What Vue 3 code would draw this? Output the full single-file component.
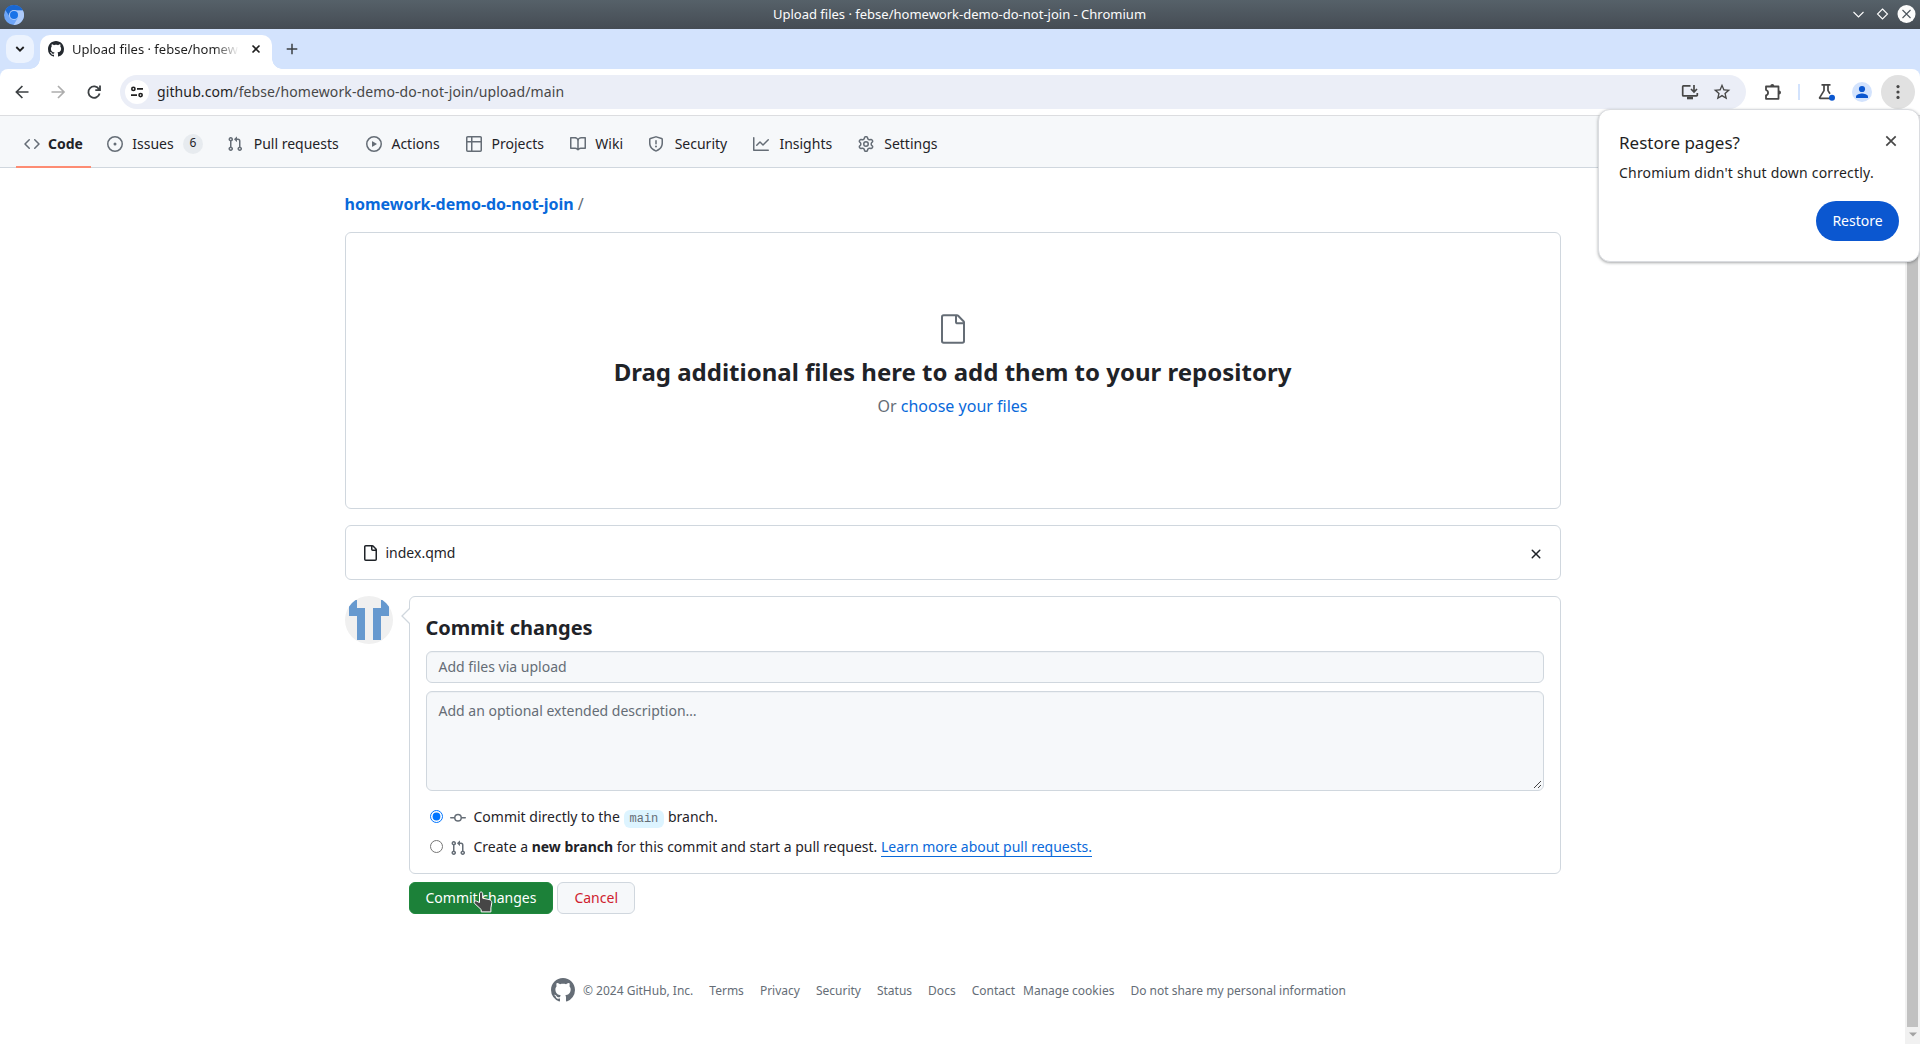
<script setup>
const tabs = [
  { label: 'Code', active: true, d: 'm11.28 3.22 4.25 4.25a.75.75 0 0 1 0 1.06l-4.25 4.25a.749.749 0 0 1-1.275-.326.749.749 0 0 1 .215-.734L13.94 8l-3.72-3.72a.749.749 0 0 1 .326-1.275.749.749 0 0 1 .734.215Zm-6.56 0a.751.751 0 0 1 1.042.018.751.751 0 0 1 .018 1.042L2.06 8l3.72 3.72a.749.749 0 0 1-.326 1.275.749.749 0 0 1-.734-.215L.47 8.53a.75.75 0 0 1 0-1.06Z' },
  { label: 'Issues', count: 6, d: 'M8 9.5a1.5 1.5 0 1 0 0-3 1.5 1.5 0 0 0 0 3ZM8 0a8 8 0 1 1 0 16A8 8 0 0 1 8 0ZM1.5 8a6.5 6.5 0 1 0 13 0 6.5 6.5 0 0 0-13 0Z' },
  { label: 'Pull requests', d: 'M1.5 3.25a2.25 2.25 0 1 1 3 2.122v5.256a2.251 2.251 0 1 1-1.5 0V5.372A2.25 2.25 0 0 1 1.5 3.25Zm5.677-.177L9.573.677A.25.25 0 0 1 10 .854V2.5h1A2.5 2.5 0 0 1 13.5 5v5.628a2.251 2.251 0 1 1-1.5 0V5a1 1 0 0 0-1-1h-1v1.646a.25.25 0 0 1-.427.177L7.177 3.427a.25.25 0 0 1 0-.354ZM3.75 2.5a.75.75 0 1 0 0 1.5.75.75 0 0 0 0-1.5Zm0 9.5a.75.75 0 1 0 0 1.5.75.75 0 0 0 0-1.5Zm8.25.75a.75.75 0 1 0 1.5 0 .75.75 0 0 0-1.5 0Z' },
  { label: 'Actions', d: 'M8 0a8 8 0 1 1 0 16A8 8 0 0 1 8 0ZM1.5 8a6.5 6.5 0 1 0 13 0 6.5 6.5 0 0 0-13 0Zm4.879-2.773 4.264 2.559a.25.25 0 0 1 0 .428l-4.264 2.559A.25.25 0 0 1 6 10.559V5.442a.25.25 0 0 1 .379-.215Z' },
  { label: 'Projects', d: 'M0 1.75C0 .784.784 0 1.75 0h12.5C15.216 0 16 .784 16 1.75v12.5A1.75 1.75 0 0 1 14.25 16H1.75A1.75 1.75 0 0 1 0 14.25ZM6.5 6.5v8h7.75a.25.25 0 0 0 .25-.25V6.5Zm8-1.5V1.75a.25.25 0 0 0-.25-.25H6.5V5Zm-13 1.5v7.75c0 .138.112.25.25.25H5v-8ZM5 5V1.5H1.75a.25.25 0 0 0-.25.25V5Z' },
  { label: 'Wiki', d: 'M0 1.75A.75.75 0 0 1 .75 1h4.253c1.227 0 2.317.59 3 1.501A3.743 3.743 0 0 1 11.006 1h4.245a.75.75 0 0 1 .75.75v10.5a.75.75 0 0 1-.75.75h-4.507a2.25 2.25 0 0 0-1.591.659l-.622.621a.75.75 0 0 1-1.06 0l-.622-.621A2.25 2.25 0 0 0 5.258 13H.75a.75.75 0 0 1-.75-.75Zm7.251 10.324.004-5.073-.002-2.253A2.25 2.25 0 0 0 5.003 2.5H1.5v9h3.757a3.75 3.75 0 0 1 1.994.574ZM8.755 4.75l-.004 7.322a3.752 3.752 0 0 1 1.992-.572H14.5v-9h-3.495a2.25 2.25 0 0 0-2.25 2.25Z' },
  { label: 'Security', d: 'M7.467.133a1.748 1.748 0 0 1 1.066 0l5.25 1.68A1.75 1.75 0 0 1 15 3.48V7c0 1.566-.32 3.182-1.303 4.682-.983 1.498-2.585 2.813-5.032 3.855a1.697 1.697 0 0 1-1.33 0c-2.447-1.042-4.049-2.357-5.032-3.855C1.32 10.182 1 8.566 1 7V3.48a1.75 1.75 0 0 1 1.217-1.667Zm.61 1.429a.25.25 0 0 0-.153 0l-5.25 1.68a.25.25 0 0 0-.174.238V7c0 1.358.275 2.666 1.057 3.86.784 1.194 2.121 2.34 4.366 3.297a.196.196 0 0 0 .154 0c2.245-.956 3.582-2.104 4.366-3.298C13.225 9.666 13.5 8.36 13.5 7V3.48a.251.251 0 0 0-.174-.237l-5.25-1.68ZM8.75 4.75v3a.75.75 0 0 1-1.5 0v-3a.75.75 0 0 1 1.5 0ZM9 10.5a1 1 0 1 1-2 0 1 1 0 0 1 2 0Z' },
  { label: 'Insights', d: 'M1.5 1.75V13.5h13.75a.75.75 0 0 1 0 1.5H.75a.75.75 0 0 1-.75-.75V1.75a.75.75 0 0 1 1.5 0Zm14.28 2.53-5.25 5.25a.75.75 0 0 1-1.06 0L7 7.06 4.28 9.78a.751.751 0 0 1-1.042-.018.751.751 0 0 1-.018-1.042l3.25-3.25a.75.75 0 0 1 1.06 0L10 7.94l4.72-4.72a.751.751 0 0 1 1.042.018.751.751 0 0 1 .018 1.042Z' },
  { label: 'Settings', d: 'M8 0a8.2 8.2 0 0 1 .701.031C9.444.095 9.99.645 10.16 1.29l.288 1.107c.018.066.079.158.212.224.231.114.454.243.668.386.123.082.233.09.299.071l1.103-.303c.644-.176 1.392.021 1.82.63.27.385.506.792.704 1.218.315.675.111 1.422-.364 1.891l-.814.806c-.049.048-.098.147-.088.294.016.257.016.515 0 .772-.01.147.038.246.088.294l.814.806c.475.469.679 1.216.364 1.891a7.977 7.977 0 0 1-.704 1.217c-.428.61-1.176.807-1.82.63l-1.102-.302c-.067-.019-.177-.011-.3.071a5.909 5.909 0 0 1-.668.386c-.133.066-.194.158-.211.224l-.29 1.106c-.168.646-.715 1.196-1.458 1.26a8.006 8.006 0 0 1-1.402 0c-.743-.064-1.289-.614-1.458-1.26l-.289-1.106c-.018-.066-.079-.158-.212-.224a5.738 5.738 0 0 1-.668-.386c-.123-.082-.233-.09-.299-.071l-1.103.303c-.644.176-1.392-.021-1.82-.63a8.12 8.12 0 0 1-.704-1.218c-.315-.675-.111-1.422.363-1.891l.815-.806c.05-.048.098-.147.088-.294a6.214 6.214 0 0 1 0-.772c.01-.147-.038-.246-.088-.294l-.815-.806C.635 6.045.431 5.298.746 4.623a7.92 7.92 0 0 1 .704-1.217c.428-.61 1.176-.807 1.82-.63l1.102.302c.067.019.177.011.3-.071.214-.143.437-.272.668-.386.133-.066.194-.158.211-.224l.29-1.106C6.009.645 6.556.095 7.299.03 7.53.01 7.764 0 8 0Zm-.571 1.525c-.036.003-.108.036-.137.146l-.289 1.105c-.147.561-.549.967-.998 1.189-.173.086-.34.183-.5.29-.417.278-.97.423-1.529.27l-1.103-.303c-.109-.03-.175.016-.195.045-.22.312-.412.644-.573.99-.014.031-.021.11.059.19l.815.806c.411.406.562.957.53 1.456a4.709 4.709 0 0 0 0 .582c.032.499-.119 1.05-.53 1.456l-.815.806c-.081.08-.073.159-.059.19.162.346.353.677.573.989.02.03.085.076.195.046l1.102-.303c.56-.153 1.113-.008 1.53.27.161.107.328.204.501.29.447.222.85.629.997 1.189l.289 1.105c.029.109.101.143.137.146a6.6 6.6 0 0 0 1.142 0c.036-.003.108-.036.137-.146l.289-1.105c.147-.561.549-.967.998-1.189.173-.086.34-.183.5-.29.417-.278.97-.423 1.529-.27l1.103.303c.109.029.175-.016.195-.045.22-.313.411-.644.573-.99.014-.031.021-.11-.059-.19l-.815-.806c-.411-.406-.562-.957-.53-1.456a4.709 4.709 0 0 0 0-.582c-.032-.499.119-1.05.53-1.456l.815-.806c.081-.08.073-.159.059-.19a6.464 6.464 0 0 0-.573-.989c-.02-.03-.085-.076-.195-.046l-1.102.303c-.56.153-1.113.008-1.53-.27a4.44 4.44 0 0 0-.501-.29c-.447-.222-.85-.629-.997-1.189l-.289-1.105c-.029-.11-.101-.143-.137-.146a6.6 6.6 0 0 0-1.142 0ZM11 8a3 3 0 1 1-6 0 3 3 0 0 1 6 0ZM9.5 8a1.5 1.5 0 1 0-3.001.001A1.5 1.5 0 0 0 9.5 8Z' },
]
const prPath = tabs[2].d
const markPath = 'M8 0c4.42 0 8 3.58 8 8a8.013 8.013 0 0 1-5.45 7.59c-.4.08-.55-.17-.55-.38 0-.27.01-1.13.01-2.2 0-.75-.25-1.23-.54-1.48 1.78-.2 3.65-.88 3.65-3.95 0-.88-.31-1.59-.82-2.15.08-.2.36-1.02-.08-2.12 0 0-.67-.22-2.2.82-.64-.18-1.32-.27-2-.27-.68 0-1.36.09-2 .27-1.53-1.03-2.2-.82-2.2-.82-.44 1.1-.16 1.92-.08 2.12-.51.56-.82 1.28-.82 2.15 0 3.06 1.86 3.75 3.64 3.95-.23.2-.44.55-.51 1.07-.46.21-1.61.55-2.33-.66-.15-.24-.6-.83-1.23-.82-.67.01-.27.38.01.53.34.19.73.9.82 1.13.16.45.68 1.31 2.69.94 0 .67.01 1.3.01 1.49 0 .21-.15.45-.55.38A7.995 7.995 0 0 1 0 8c0-4.42 3.58-8 8-8Z'
const footerLinks = ['Terms', 'Privacy', 'Security', 'Status', 'Docs', 'Contact']
</script>

<template>
  <div class="window">
    <header class="titlebar">
      <svg class="app-icon" viewBox="0 0 20 20" width="20" height="20">
        <circle cx="10" cy="10" r="10" fill="#6ea5f8" />
        <path d="M10 5.3h8.8A10 10 0 0 1 9.6 20l4.5-7.6z" fill="#aecbfa" />
        <path d="M1.3 5A10 10 0 0 1 18.8 5.3H10a4.7 4.7 0 0 0-4.4 6.2z" fill="#1967d2" />
        <circle cx="10" cy="10" r="5" fill="#aecbfa" />
        <circle cx="10" cy="10" r="4" fill="#1a73e8" />
      </svg>
      <span class="window-title">Upload files · febse/homework-demo-do-not-join - Chromium</span>
      <svg class="window-buttons" viewBox="0 0 68 20" width="68" height="20" fill="none">
        <path d="M1.5 8l5 5 5-5" stroke="#fcfcfc" stroke-width="1.1" />
        <path d="M30.5 5l5 5-5 5-5-5z" stroke="#fcfcfc" stroke-width="1.1" />
        <circle cx="54.5" cy="10" r="9" fill="#fcfcfc" />
        <path d="M50.5 6l8 8m0-8l-8 8" stroke="#4b545c" stroke-width="1.1" />
      </svg>
    </header>

    <div class="tabstrip">
      <div class="tab-search">
        <svg viewBox="0 0 10 10" width="10" height="10" fill="none"><path d="M1.3 3l3.7 3.7L8.7 3" stroke="#1f1f1f" stroke-width="1.8" /></svg>
      </div>
      <div class="browser-tab">
        <svg viewBox="0 0 16 16" width="16" height="16" fill="#24292f"><path :d="markPath" /></svg>
        <span class="tab-title">Upload files · febse/homew</span>
        <svg viewBox="0 0 10 10" width="10" height="10"><path d="M1.5 1.5l7 7m0-7l-7 7" stroke="#1f1f1f" stroke-width="1.6" /></svg>
      </div>
      <svg class="new-tab" viewBox="0 0 12 12" width="12" height="12"><path d="M6 .7v10.6M.7 6h10.6" stroke="#3c4043" stroke-width="1.5" /></svg>
    </div>

    <div class="toolbar-back">
      <div class="toolbar">
        <svg class="nav-icon" viewBox="0 0 20 20" width="20" height="20" fill="none" stroke="#3c4043" stroke-width="1.7"><path d="M16.5 10H4.6M10.4 4l-6 6 6 6" /></svg>
        <svg class="nav-icon" viewBox="0 0 20 20" width="20" height="20" fill="none" stroke="#adadad" stroke-width="1.7"><path d="M3.5 10h12.3M10 4l6 6-6 6" /></svg>
        <svg class="nav-icon" viewBox="0 0 20 20" width="20" height="20" fill="none" stroke="#3c4043" stroke-width="1.8"><path d="M15.6 11.5A5.7 5.7 0 1 1 15 7.2M16 3.5v4.7h-4.7" /></svg>
        <div class="omnibox">
          <span class="site-info">
            <svg viewBox="0 0 14 14" width="14" height="14" fill="none" stroke="#1f1f1f" stroke-width="1.6"><circle cx="3.4" cy="3.9" r="1.6" /><path d="M7 3.9h6M1 10.1h6" /><circle cx="10.6" cy="10.1" r="1.6" /></svg>
          </span>
          <span class="url"><b>github.com</b>/febse/homework-demo-do-not-join/upload/main</span>
          <svg class="install" viewBox="0 0 18 16" width="18" height="16" fill="none" stroke="#474747" stroke-width="1.7"><path d="M9.5 1.9H2.4a.7.7 0 0 0-.7.7v8.6c0 .4.3.7.7.7h13.2a.7.7 0 0 0 .7-.7V9" /><path d="M13 1v6.6M10 5l3 3 3-3" /><path d="M6 14h6" stroke-width="2.6" /></svg>
          <svg viewBox="0 0 24 24" width="20" height="20" fill="#474747"><path d="M22 9.24l-7.19-.62L12 2 9.19 8.63 2 9.24l5.46 4.73L5.82 21 12 17.27 18.18 21l-1.63-7.03L22 9.24zM12 15.4l-3.76 2.27 1-4.28-3.32-2.88 4.38-.38L12 6.1l1.71 4.04 4.38.38-3.32 2.88 1 4.28L12 15.4z" /></svg>
        </div>
        <svg class="ext" viewBox="0 0 18 18" width="18" height="18"><path d="M2 3.5h12.5v12.3H2v-3.4a2.8 2.8 0 0 0 0-5.4z" fill="none" stroke="#474747" stroke-width="1.8" stroke-linejoin="round" /><path d="M6.3 3a2 2 0 0 1 4 0zM15 7.6a2 2 0 0 1 0 4z" fill="#474747" /></svg>
        <i class="divider"></i>
        <svg class="flask" viewBox="0 0 20 20" width="20" height="20" fill="none"><path d="M4.5 2.9h9M7 3v5.6L2.7 15.6a.5.5 0 0 0 .4.8H15M11 3v5.6l2 3.2" stroke="#474747" stroke-width="1.7" /><circle cx="15" cy="15.8" r="3" fill="#0b57d0" /></svg>
        <svg class="profile" viewBox="0 0 20 20" width="20" height="20"><circle cx="10" cy="10" r="10" fill="#d3e3fd" /><circle cx="10" cy="7" r="3.1" fill="#0b57d0" /><path d="M4 16v-1.6c0-2 4-3 6-3s6 1 6 3V16z" fill="#0b57d0" /></svg>
        <span class="menu"><svg viewBox="0 0 4 16" width="4" height="16" fill="#474747"><circle cx="2" cy="2.6" r="1.6" /><circle cx="2" cy="8" r="1.6" /><circle cx="2" cy="13.4" r="1.6" /></svg></span>
      </div>
    </div>

    <div class="viewport">
      <div class="page">
        <nav class="repo-nav">
          <a v-for="t in tabs" :key="t.label" class="repo-tab" :class="{ active: t.active }">
            <svg viewBox="0 0 16 16" width="16" height="16"><path :d="t.d" /></svg>
            <span class="tab-label" :data-content="t.label">{{ t.label }}</span>
            <span v-if="t.count" class="counter">{{ t.count }}</span>
          </a>
        </nav>

        <main class="container">
          <div class="breadcrumb"><a>homework-demo-do-not-join</a> /</div>

          <section class="dropzone">
            <svg viewBox="0 0 24 24" width="32" height="32" fill="#656d76"><path fill-rule="evenodd" d="M3 3a2 2 0 0 1 2-2h9.982a2 2 0 0 1 1.414.586l4.018 4.018A2 2 0 0 1 21 7.018V21a2 2 0 0 1-2 2H5a2 2 0 0 1-2-2Zm2-.5a.5.5 0 0 0-.5.5v18a.5.5 0 0 0 .5.5h14a.5.5 0 0 0 .5-.5V8.5h-4a2 2 0 0 1-2-2v-4Zm10 0v4a.5.5 0 0 0 .5.5h4a.5.5 0 0 0-.146-.336l-4.018-4.018A.5.5 0 0 0 15 2.5Z" /></svg>
            <h2>Drag additional files here to add them to your repository</h2>
            <p>Or <a>choose your files</a></p>
          </section>

          <section class="file-row">
            <svg viewBox="0 0 16 16" width="16" height="16" fill="#1f2328"><path d="M2 1.75C2 .784 2.784 0 3.75 0h6.586c.464 0 .909.184 1.237.513l2.914 2.914c.329.328.513.773.513 1.237v9.586A1.75 1.75 0 0 1 13.25 16h-9.5A1.75 1.75 0 0 1 2 14.25Zm1.75-.25a.25.25 0 0 0-.25.25v12.5c0 .138.112.25.25.25h9.5a.25.25 0 0 0 .25-.25V6h-2.75A1.75 1.75 0 0 1 9 4.25V1.5Zm6.75.062V4.25c0 .138.112.25.25.25h2.688l-.011-.013-2.914-2.914-.013-.011Z" /></svg>
            <span class="file-name">index.qmd</span>
            <svg class="remove" viewBox="0 0 16 16" width="16" height="16" fill="#1f2328"><path d="M3.72 3.72a.75.75 0 0 1 1.06 0L8 6.94l3.22-3.22a.749.749 0 0 1 1.275.326.749.749 0 0 1-.215.734L9.06 8l3.22 3.22a.749.749 0 0 1-.326 1.275.749.749 0 0 1-.734-.215L8 9.06l-3.22 3.22a.751.751 0 0 1-1.042-.018.751.751 0 0 1-.018-1.042L6.94 8 3.72 4.78a.75.75 0 0 1 0-1.06Z" /></svg>
          </section>

          <div class="commit">
            <svg class="avatar" viewBox="0 0 48 48" width="48" height="48">
              <clipPath id="round"><circle cx="24" cy="24" r="24" /></clipPath>
              <g clip-path="url(#round)"><rect width="48" height="48" fill="#f0f0f0" /><path d="M4 4h8v8h8v32h-8V20H4zM44 4h-8v8h-8v32h8V20h8z" fill="#6699cf" /></g>
            </svg>
            <div class="commit-main">
              <section class="commit-box">
                <svg class="caret" viewBox="0 0 9 16" width="9" height="16"><path d="M9 0L1 8l8 8" fill="#fff" stroke="#d0d7de" stroke-width="1.3" /></svg>
                <h3>Commit changes</h3>
                <div class="field">Add files via upload</div>
                <div class="field area">
                  Add an optional extended description…
                  <svg class="grip" viewBox="0 0 9 9" width="9" height="9"><path d="M1 8l7-7M5 8l3-3" stroke="#444" stroke-width="1" /></svg>
                </div>
                <label class="choice">
                  <input type="radio" name="target" checked />
                  <svg viewBox="0 0 16 16" width="16" height="16" fill="#656d76"><path d="M11.93 8.5a4.002 4.002 0 0 1-7.86 0H.75a.75.75 0 0 1 0-1.5h3.32a4.002 4.002 0 0 1 7.86 0h3.32a.75.75 0 0 1 0 1.5Zm-1.43-.75a2.5 2.5 0 1 0-5 0 2.5 2.5 0 0 0 5 0Z" /></svg>
                  <span>Commit directly to the <code>main</code> branch.</span>
                </label>
                <label class="choice second">
                  <input type="radio" name="target" />
                  <svg viewBox="0 0 16 16" width="16" height="16" fill="#656d76"><path :d="prPath" /></svg>
                  <span>Create a <strong>new branch</strong> for this commit and start a pull request. <a>Learn more about pull requests.</a></span>
                </label>
              </section>
              <div class="actions">
                <button class="primary">Commit changes
                  <svg class="cursor" viewBox="0 0 20 22" width="20" height="22"><path d="M6.5 11.5V2.8c0-2.4 3.2-2.4 3.2 0v4.4l6.3 1.3c1.8.4 2.8 1.4 2.8 3.2l-.9 5.2v4H8.2v-2.3L1.2 12c-.8-1.3 1-2.6 2.2-1.9z" fill="#464646" stroke="#fff" stroke-width="1" /></svg>
                </button>
                <button class="cancel">Cancel</button>
              </div>
            </div>
          </div>
        </main>

        <footer class="footer">
          <svg viewBox="0 0 16 16" width="24" height="24" fill="#656d76"><path :d="markPath" /></svg>
          <span class="copy">© 2024 GitHub, Inc.</span>
          <a v-for="l in footerLinks" :key="l">{{ l }}</a>
          <a class="cookies">Manage cookies</a>
          <a>Do not share my personal information</a>
        </footer>
      </div>
      <div class="scrollbar">
        <div class="thumb"></div>
        <svg viewBox="0 0 8 5" width="8" height="5"><path d="M0 .5h8L4 4.5z" fill="#a3a3a3" /></svg>
      </div>
    </div>

    <aside class="popover">
      <div class="pop-head">
        <span>Restore pages?</span>
        <svg viewBox="0 0 12 12" width="12" height="12"><path d="M1.3 1.3l9.4 9.4m0-9.4l-9.4 9.4" stroke="#474747" stroke-width="1.7" /></svg>
      </div>
      <p>Chromium didn't shut down correctly.</p>
      <button>Restore</button>
    </aside>
  </div>
</template>

<style>
html, body { margin: 0; overflow: hidden; background: #fff; }
</style>

<style scoped>
.window, .window * { box-sizing: border-box; }
.window {
  position: relative; width: 1920px; height: 1044px; overflow: hidden;
  display: flex; flex-direction: column;
  font-family: "Noto Sans", sans-serif; font-size: 14px; color: #1f2328;
}
svg { display: block; flex: none; }
button { font: inherit; margin: 0; padding: 0; border: 0; }
.titlebar {
  height: 29px; flex: none; display: flex; align-items: center; padding: 0 0 0 4px;
  background: linear-gradient(#566169, #454c54); color: #fcfcfc; font-size: 13px;
}
.window-title { flex: 1; text-align: center; padding-left: 43px; line-height: 28px; height: 29px; }
.window-buttons { margin-top: -1px; }
.tabstrip { height: 40px; flex: none; display: flex; background: #d3e3fd; padding: 6px 0 0 6px; }
.tab-search { width: 28px; height: 28px; border-radius: 10px; background: #ecf3fe; display: flex; align-items: center; justify-content: center; }
.browser-tab {
  position: relative; width: 232px; height: 34px; margin-left: 6px; padding: 0 11px 6px 8px;
  display: flex; align-items: center; background: #fff; border-radius: 10px 10px 0 0;
}
.browser-tab::before, .browser-tab::after { content: ""; position: absolute; bottom: 0; width: 10px; height: 10px; }
.browser-tab::before { left: -10px; background: radial-gradient(circle at 0 0, transparent 9.5px, #fff 10px); }
.browser-tab::after { right: -10px; background: radial-gradient(circle at 100% 0, transparent 9.5px, #fff 10px); }
.tab-title {
  width: 167px; margin: 0 auto 0 8px; white-space: nowrap; font-size: 13px; line-height: 20px; color: #1f1f1f;
  -webkit-mask-image: linear-gradient(90deg, #000 142px, transparent 167px);
}
.new-tab { margin: 8px 0 0 14px; }
.toolbar-back { background: #d3e3fd; flex: none; }
.toolbar { height: 47px; display: flex; align-items: center; background: #fff; border-radius: 8px 8px 0 0; border-bottom: 1px solid #dcdde0; padding: 0 5px 0 12px; }
.nav-icon { margin-right: 16px; }
.omnibox { width: 1626px; height: 34px; display: flex; align-items: center; background: #ebeef7; border-radius: 17px; padding: 0 14px 0 5px; }
.site-info { width: 24px; height: 24px; border-radius: 12px; background: #fff; display: flex; align-items: center; justify-content: center; }
.url { flex: 1; margin-left: 8px; font-size: 14px; line-height: 20px; letter-spacing: .11px; color: #474747; }
.url b { font-weight: 400; color: #1f1f1f; }
.install { margin-right: 13px; }
.ext { margin-left: 18px; }
.divider { width: 2px; height: 16px; background: #d3e3fd; margin-left: 16px; }
.flask { margin-left: 17px; }
.profile { margin-left: 15px; }
.menu { width: 34px; height: 34px; border-radius: 17px; background: #e1e1e1; margin-left: 9px; display: flex; align-items: center; justify-content: center; }
.viewport { flex: 1; display: flex; min-height: 0; }
.page { flex: 1; }
.repo-nav { height: 52px; display: flex; gap: 8px; padding: 4px 16px 0; background: #f6f8fa; border-bottom: 1px solid #d0d7de; }
.repo-tab { height: 48px; padding: 0 8px; display: flex; align-items: center; gap: 8px; line-height: 21px; }
.repo-tab svg { fill: #656d76; }
.repo-tab.active { border-bottom: 2px solid #fd8c73; padding-top: 2px; }
.repo-tab.active .tab-label { font-weight: 700; }
/* Reserves the width of the bold label so tabs keep their place when selected */
.tab-label { text-align: center; margin-top: -2px; }
.tab-label::before { content: attr(data-content); display: block; height: 0; font-weight: 700; visibility: hidden; overflow: hidden; }
.counter { min-width: 20px; height: 20px; padding: 0 6px; border-radius: 24px; background: rgba(175,184,193,.2); font-size: 12px; line-height: 18px; text-align: center; }
.container { width: 1216px; margin: 0 auto; padding-top: 24px; }
.breadcrumb { height: 24px; line-height: 24px; font-size: 16px; color: #656d76; margin-bottom: 16px; }
.breadcrumb a { font-weight: 700; color: #0969da; }
a { color: inherit; text-decoration: none; }
.dropzone { height: 277px; border: 1px solid #d0d7de; border-radius: 6px; display: flex; flex-direction: column; align-items: center; padding-top: 80px; }
.dropzone h2 { margin: 9px 0 0; font-size: 24px; font-weight: 700; line-height: 36px; }
.dropzone p { margin: 4px 0 0; font-size: 16px; line-height: 24px; color: #656d76; }
.dropzone a, .choice a { color: #0969da; }
.file-row { height: 55px; margin-top: 16px; border: 1px solid #d0d7de; border-radius: 6px; display: flex; align-items: center; padding: 1px 16px 0; }
.file-name { margin-left: 8px; line-height: 21px; margin-top: -2px; }
.remove { margin-left: auto; margin-top: 1px; }
.commit { display: flex; margin-top: 16px; }
.commit-main { flex: 1; margin-left: 16px; }
.commit-box { position: relative; height: 278px; border: 1px solid #d0d7de; border-radius: 6px; padding: 16px; }
.caret { position: absolute; left: -9px; top: 11px; }
.commit-box h3 { margin: 0 0 8px; font-size: 20px; line-height: 30px; font-weight: 700; }
.field { position: relative; height: 32px; border: 1px solid #d0d7de; border-radius: 6px; background: #f6f8fa; color: #656d76; padding: 5px 12px; line-height: 20px; box-shadow: inset 0 1px 0 rgba(208,215,222,.2); }
.area { height: 100px; margin: 8px 0 15px; padding-top: 9px; }
.grip { position: absolute; right: 1px; bottom: 1px; }
.choice { display: flex; align-items: center; height: 21px; line-height: 21px; padding-left: 4px; }
.choice input { width: 13px; height: 13px; margin: 0; }
.choice svg { margin: 2px 8px 0 7px; }
.choice.second { margin-top: 9px; }
.choice strong { font-weight: 700; }
.choice a { border-bottom: 1px solid #0969da; }
.choice code { font-family: "Liberation Mono", monospace; font-size: 12px; line-height: 1; background: #ddf4ff; color: #656d76; border-radius: 6px; padding: 2px 6px; }
.actions { display: flex; gap: 4px; margin-top: 8px; }
.actions button { height: 32px; border-radius: 6px; border: 1px solid; padding: 0 16px; line-height: 30px; }
.actions .primary { position: relative; background: #1c8139; border-color: #1f883d; color: #fff; }
.actions .cancel { background: #f6f8fa; border-color: #d0d7de; color: #cf222e; }
.cursor { position: absolute; left: 63px; top: 8px; }
.footer { display: flex; align-items: center; width: 804px; margin: 64px auto 0; font-size: 12px; line-height: 18px; color: #656d76; white-space: nowrap; }
.footer span, .footer a { padding-top: 1px; }
.footer .copy { margin-left: 8.5px; }
.footer a { margin-left: 16px; }
.footer .cookies { margin-left: 8px; }
.scrollbar { width: 15px; background: #f1f1f1; display: flex; flex-direction: column; align-items: center; }
.thumb { width: 11px; height: 911px; background: #c1c1c1; margin-bottom: 5px; }
.popover {
  position: absolute; left: 1598px; top: 109px; width: 322px; height: 153px; background: #fff; border: 1px solid #dadce0; border-radius: 12px;
  box-shadow: 0 1px 3px rgba(60,64,67,.45); padding: 20px; display: flex; flex-direction: column; color: #1f1f1f;
}
.pop-head { display: flex; justify-content: space-between; font-size: 17px; line-height: 26px; height: 24px; }
.pop-head svg { margin: 5px 2px 0 0; }
.popover p { margin: 9px 0 0; line-height: 20px; letter-spacing: .2px; }
.popover button { width: 83px; height: 40px; margin: 18px 0 0 auto; padding-bottom: 2px; border-radius: 20px; background: #0b57d0; color: #fff; }
</style>
